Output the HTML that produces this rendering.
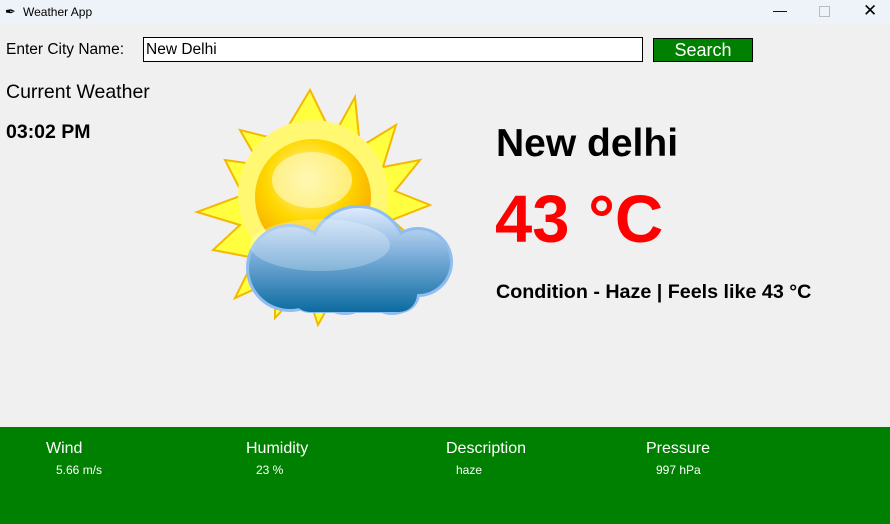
<!DOCTYPE html>
<html><head><style>
body{margin:0;width:890px;height:524px;background:#f0f0f0;font-family:"Liberation Sans",sans-serif;position:relative;overflow:hidden}
.t{position:absolute;white-space:nowrap}
</style></head><body>
<div style="position:absolute;left:0;top:0;width:890px;height:24px;background:#eef2f9"></div>
<div class="t" style="left:5px;top:4px;font-size:13px">&#x2712;</div>
<div class="t" style="left:23px;top:5px;font-size:12px;color:#000">Weather App</div>
<div class="t" style="left:773px;top:2px;font-size:14px">&#8212;</div>
<div style="position:absolute;left:819px;top:6px;width:9px;height:9px;border:1px solid #bbb"></div>
<div class="t" style="left:863px;top:1px;font-size:17px">&#x2715;</div>

<div class="t" style="left:6px;top:41px;font-size:15.5px">Enter City Name:</div>
<div style="position:absolute;left:143px;top:37px;width:498px;height:23px;border:1px solid #000;background:#fff"></div>
<div class="t" style="left:146px;top:41px;font-size:15.5px">New Delhi</div>
<div style="position:absolute;left:653px;top:38px;width:98px;height:22px;border:1px solid #000;background:#008000;color:#fff;font-size:18px;text-align:center;line-height:23px">Search</div>

<div class="t" style="left:6px;top:81px;font-size:19.5px">Current Weather</div>
<div class="t" style="left:6px;top:121px;font-size:19.5px;font-weight:bold">03:02 PM</div>

<svg style="position:absolute;left:0;top:0" width="890" height="524">
<defs>
<radialGradient id="s" cx="0.45" cy="0.35" r="0.7"><stop offset="0" stop-color="#fff7c0"/><stop offset="0.5" stop-color="#ffd800"/><stop offset="1" stop-color="#f5a000"/></radialGradient>
<linearGradient id="c" x1="0" y1="205" x2="0" y2="313" gradientUnits="userSpaceOnUse"><stop offset="0" stop-color="#e4efff"/><stop offset="0.45" stop-color="#7fb0dc"/><stop offset="1" stop-color="#0a6a9e"/></linearGradient>
</defs>
<polygon fill="#ffff40" stroke="#f5b800" stroke-width="2" points="310,90 333,137 355,97 360,147 396,125 383,167 420,160 395,191 430,205 392,220 420,245 382,248 400,290 360,270 365,310 340,285 318,325 305,285 275,318 275,280 235,298 255,258 213,250 240,225 197,212 243,195 225,160 260,165 240,130 280,140"/>
<circle cx="313" cy="195" r="75" fill="#fff870"/>
<circle cx="313" cy="197" r="58" fill="url(#s)"/>
<ellipse cx="312" cy="180" rx="40" ry="28" fill="#fff8b0" opacity="0.7"/>
<g fill="#8fbdf0">
<circle cx="290" cy="268" r="44"/><circle cx="358" cy="255" r="50"/><circle cx="418" cy="262" r="35"/><circle cx="345" cy="285" r="30"/><circle cx="392" cy="285" r="30"/><rect x="290" y="255" width="130" height="58" rx="20"/>
</g>
<g fill="url(#c)">
<circle cx="290" cy="268" r="41"/><circle cx="358" cy="255" r="47"/><circle cx="418" cy="262" r="32"/><circle cx="345" cy="285" r="27"/><circle cx="392" cy="285" r="27"/><rect x="292" y="258" width="125" height="54" rx="18"/>
</g>
<ellipse cx="320" cy="245" rx="70" ry="26" fill="#ffffff" opacity="0.25"/>
</svg>

<div class="t" style="left:496px;top:122px;font-size:39px;font-weight:bold">New delhi</div>
<div class="t" style="left:495px;top:181px;font-size:67px;font-weight:bold;color:#ff0000">43 °C</div>
<div class="t" style="left:496px;top:281px;font-size:19.7px;font-weight:bold">Condition - Haze | Feels like 43 °C</div>

<div style="position:absolute;left:0;top:427px;width:890px;height:97px;background:#008000"></div>
<div class="t" style="left:46px;top:440px;font-size:16px;color:#fff">Wind</div>
<div class="t" style="left:56px;top:463px;font-size:12px;color:#fff">5.66 m/s</div>
<div class="t" style="left:246px;top:440px;font-size:16px;color:#fff">Humidity</div>
<div class="t" style="left:256px;top:463px;font-size:12px;color:#fff">23 %</div>
<div class="t" style="left:446px;top:440px;font-size:16px;color:#fff">Description</div>
<div class="t" style="left:456px;top:463px;font-size:12px;color:#fff">haze</div>
<div class="t" style="left:646px;top:440px;font-size:16px;color:#fff">Pressure</div>
<div class="t" style="left:656px;top:463px;font-size:12px;color:#fff">997 hPa</div>
</body></html>
